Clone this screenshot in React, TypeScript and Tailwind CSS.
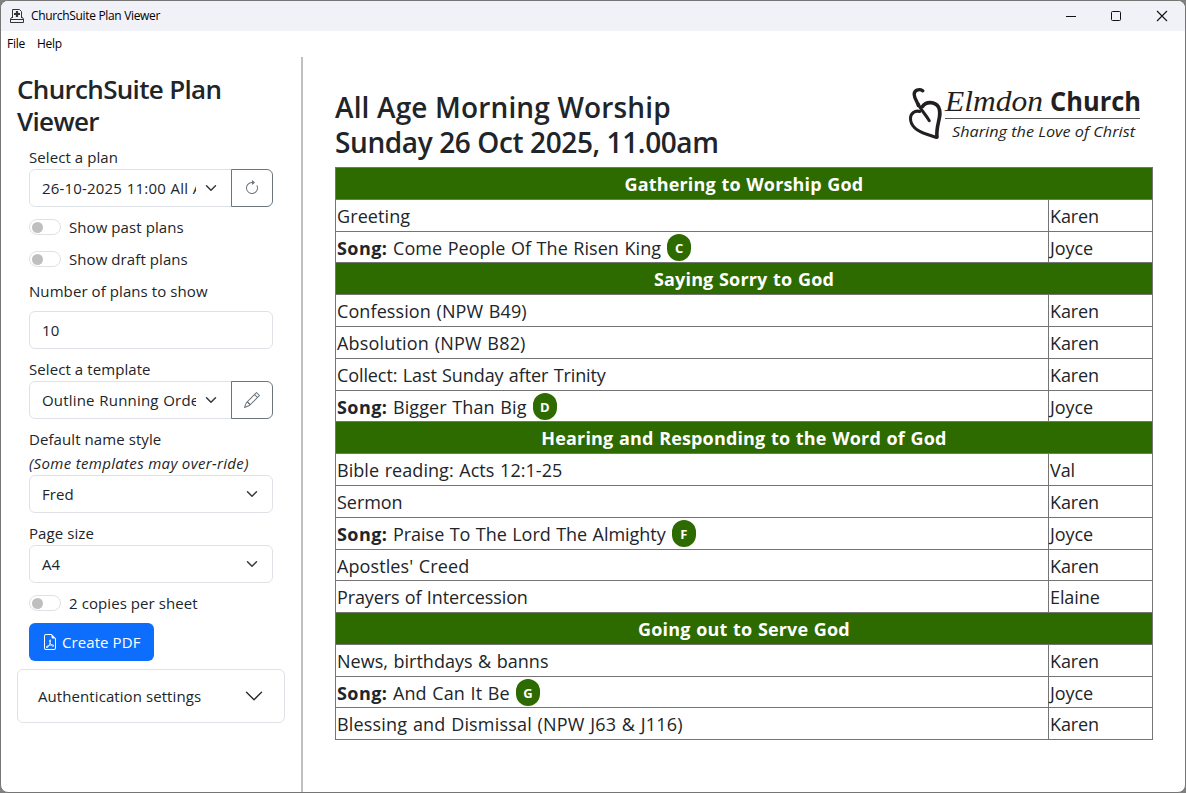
import React from "react";
import { BsArrowClockwise, BsFileEarmarkPdf, BsPencil } from "react-icons/bs";

type Row =
  | { kind: "section"; title: string }
  | { kind: "item"; text: string; who: string; tracking?: string; short?: boolean }
  | { kind: "song"; text: string; who: string; mark: string; tracking?: string; short?: boolean };

const rows: Row[] = [
  { kind: "section", title: "Gathering to Worship God" },
  { kind: "item", text: "Greeting", who: "Karen" },
  { kind: "song", text: "Come People Of The Risen King", who: "Joyce", mark: "C", tracking: "tracking-[0.05px]", short: true },
  { kind: "section", title: "Saying Sorry to God" },
  { kind: "item", text: "Confession (NPW B49)", who: "Karen" },
  { kind: "item", text: "Absolution (NPW B82)", who: "Karen", tracking: "tracking-[0.18px]" },
  { kind: "item", text: "Collect: Last Sunday after Trinity", who: "Karen", tracking: "tracking-[-0.1px]" },
  { kind: "song", text: "Bigger Than Big", who: "Joyce", mark: "D", short: true },
  { kind: "section", title: "Hearing and Responding to the Word of God" },
  { kind: "item", text: "Bible reading: Acts 12:1-25", who: "Val", tracking: "tracking-[0.06px]" },
  { kind: "item", text: "Sermon", who: "Karen", tracking: "tracking-[-0.05px]" },
  { kind: "song", text: "Praise To The Lord The Almighty", who: "Joyce", mark: "F", tracking: "tracking-[-0.03px]" },
  { kind: "item", text: "Apostles' Creed", who: "Karen", short: true },
  { kind: "item", text: "Prayers of Intercession", who: "Elaine", tracking: "tracking-[-0.11px]" },
  { kind: "section", title: "Going out to Serve God" },
  { kind: "item", text: "News, birthdays & banns", who: "Karen", tracking: "tracking-[0.02px]" },
  { kind: "song", text: "And Can It Be", who: "Joyce", mark: "G", short: true },
  { kind: "item", text: "Blessing and Dismissal (NPW J63 & J116)", who: "Karen", tracking: "tracking-[0.18px]" },
];

function Chevron({ className }: { className: string }) {
  return (
    <svg viewBox="0 0 16 16" className={className} fill="none" stroke="#343a40" strokeWidth="2" strokeLinecap="round" strokeLinejoin="round">
      <path d="m2 5 6 6 6-6" />
    </svg>
  );
}

function Select({ value, action }: { value: string; action?: React.ReactNode }) {
  return (
    <div className="flex h-[38px]">
      <div
        className={
          action
            ? "flex w-[203px] items-center rounded-l-md border border-[#dee2e6] pl-3"
            : "flex w-full items-center rounded-md border border-[#dee2e6] pl-3 pr-[14px]"
        }
      >
        <span className={action ? "w-[154px] overflow-hidden whitespace-nowrap tracking-[0.18px] [word-spacing:0.6px]" : "grow"}>{value}</span>
        <Chevron className={action ? "ml-[9px] size-3 shrink-0" : "size-3 shrink-0"} />
      </div>
      {action && (
        <button className="-ml-px flex w-[42px] items-center justify-center rounded-r-md border border-[#6c757d] text-[#6c757d]">
          {action}
        </button>
      )}
    </div>
  );
}

function Toggle({ label }: { label: string }) {
  return (
    <div className="flex h-6 items-center gap-2">
      <span className="flex h-4 w-8 items-center rounded-full border border-[#dee2e6] pl-0.5">
        <span className="size-[11px] rounded-full bg-[#bfbfbf]" />
      </span>
      <span>{label}</span>
    </div>
  );
}

function AppIcon() {
  return (
    <svg viewBox="0 0 16 16" className="h-4 w-4" fill="none" stroke="#333" strokeWidth="1">
      <path d="M3.500 10V1.500h7l2 2V10" />
      <path d="M3.500 8.500 1.500 11v3.500h13V11l-2-2.500M1.500 11.500h13" />
      <path d="M8 3v6M5 6h6" strokeWidth="2.200" />
    </svg>
  );
}

function Logo() {
  return (
    <svg viewBox="0 0 236 54" className="h-[54px] w-[236px] overflow-visible" fill="#231f20">
      <g fill="none" stroke="#231f20" strokeLinecap="round">
        <path d="M13.800 3.800C10 1.200 5 3.500 5.200 7.500 5.400 11.500 8 14 9.300 18.500" strokeWidth="3.400" />
        <path d="M9.300 17C11.500 23 15.500 25.500 20.300 33.800" strokeWidth="3" />
        <path d="M10.800 24.500C6 23 1.500 26.500 1.500 31.500 1.500 39 9 44.500 18.500 47.500L27.500 50.500" strokeWidth="3" />
        <path d="M13.500 19.500C17 14 26 14.500 29.500 20 34 28.500 26.500 37 28 50" strokeWidth="3.600" />
      </g>
      <text x="36" y="24" fontFamily="Liberation Serif, serif" fontStyle="italic" fontSize="29" textLength="98" lengthAdjust="spacingAndGlyphs">Elmdon</text>
      <text x="141" y="24" fontFamily="Open Sans, sans-serif" fontWeight="700" fontSize="27" textLength="91" lengthAdjust="spacingAndGlyphs">Church</text>
      <rect x="36" y="31" width="195" height="1" fill="#555" />
      <text x="43" y="50" fontFamily="Open Sans, sans-serif" fontStyle="italic" fontWeight="500" fontSize="15" textLength="183" lengthAdjust="spacingAndGlyphs">Sharing the Love of Christ</text>
    </svg>
  );
}

function PlanRow({ row }: { row: Row }) {
  if (row.kind === "section") {
    return (
      <div className="h-8 border-t border-[#757575] bg-[#2d6a00] text-center text-[18px] font-bold leading-8 tracking-[0.15px] text-white">
        {row.title}
      </div>
    );
  }
  return (
    <div className={row.short ? "flex h-[31px] border-t border-[#757575] leading-8" : "flex h-8 border-t border-[#757575] leading-8"}>
      <div className="flex grow items-start pl-px">
        {row.kind === "song" && <b className="w-14 tracking-[0.45px]">Song:</b>}
        <span className={row.tracking}>{row.text}</span>
        {row.kind === "song" && (
          <span className="ml-1.5 mt-0.5 flex h-[27px] min-w-6 items-center justify-center rounded-full bg-[#2d6a00] px-[7.500px] text-[13px] font-bold tracking-normal text-white">
            {row.mark}
          </span>
        )}
      </div>
      <div className="w-[104px] border-l border-[#757575] pl-px tracking-[-0.1px]">{row.who}</div>
    </div>
  );
}

export default function App() {
  return (
    <div className="h-[793px] w-[1186px] overflow-hidden bg-[#808080] font-['Open_Sans',sans-serif] text-[#212529]">
      <div className="flex h-full flex-col overflow-hidden rounded-lg border border-[#757575] bg-white">
        <header className="flex h-[30px] shrink-0 items-center bg-[#f1f2f8] pl-2">
          <AppIcon />
          <span className="ml-1.5 text-[12px] tracking-[-0.33px] text-black">ChurchSuite Plan Viewer</span>
          <div className="ml-auto flex items-center">
            <svg width="120" height="12" viewBox="0 0 120 12" className="mr-1" fill="none" stroke="#111">
              <path d="M5 6.500h10" />
              <rect x="50.500" y="1.500" width="9" height="9" rx="1" />
              <path d="m96 1 10 10m0-10L96 11" strokeWidth="1.100" />
            </svg>
          </div>
        </header>
        <nav className="flex h-[26px] shrink-0 items-center gap-3 pl-1.5 text-[12px] tracking-[-0.25px] text-black">
          <span>File</span>
          <span>Help</span>
        </nav>
        <div className="flex min-h-0 grow">
          <aside className="w-[302px] shrink-0 border-r-2 border-[#c0c0c0] pl-4 pt-4 text-[15px] leading-6 tracking-[0.08px]">
            <h1 className="w-60 text-[26px] font-semibold leading-8 tracking-[-0.67px]">ChurchSuite Plan Viewer</h1>
            <div className="ml-3 mt-2 w-[244px]">
              <div>Select a plan</div>
              <Select value="26-10-2025 11:00 All Age Morning Worship" action={<BsArrowClockwise size={16} />} />
              <div className="mt-2 flex flex-col gap-2">
                <Toggle label="Show past plans" />
                <Toggle label="Show draft plans" />
              </div>
              <div className="mt-2">Number of plans to show</div>
              <div className="mt-2 flex h-[38px] items-center rounded-md border border-[#dee2e6] pl-3">10</div>
              <div className="mt-2">Select a template</div>
              <Select value="Outline Running Order" action={<BsPencil size={16} />} />
              <div className="mt-2">Default name style</div>
              <div className="italic tracking-[0.33px]">(Some templates may over-ride)</div>
              <Select value="Fred" />
              <div className="mt-2">Page size</div>
              <Select value="A4" />
              <div className="mt-2">
                <Toggle label="2 copies per sheet" />
              </div>
              <button className="mt-2 flex h-[38px] w-[125px] items-center gap-1 rounded-md bg-[#0d6efd] pl-[13px] text-white">
                <BsFileEarmarkPdf size={16} />
                <span>Create PDF</span>
              </button>
            </div>
            <div className="mt-2 flex h-[54px] w-[268px] items-center justify-between rounded-md border border-[#dee2e6] pl-5 pr-5">
              <span>Authentication settings</span>
              <svg viewBox="0 0 16 16" className="size-5" fill="none" stroke="#212529" strokeLinecap="round" strokeLinejoin="round">
                <path d="m2 5 6 6 6-6" />
              </svg>
            </div>
          </aside>
          <main className="ml-8 w-[818px]">
            <div className="flex h-[110px] justify-between pr-2">
              <h2 className="mt-[33px] text-[28px] font-semibold leading-[35px] tracking-[-0.39px]">
                <span className="tracking-[0.15px]">All Age Morning Worship</span>
                <br />
                Sunday 26 Oct 2025, 11.00am
              </h2>
              <div className="mt-[30px]">
                <Logo />
              </div>
            </div>
            <div className="border-x border-b border-[#757575] text-[18px] tracking-[0.1px] [word-spacing:0.8px]">
              {rows.map((row, i) => (
                <PlanRow key={i} row={row} />
              ))}
            </div>
          </main>
        </div>
      </div>
    </div>
  );
}
